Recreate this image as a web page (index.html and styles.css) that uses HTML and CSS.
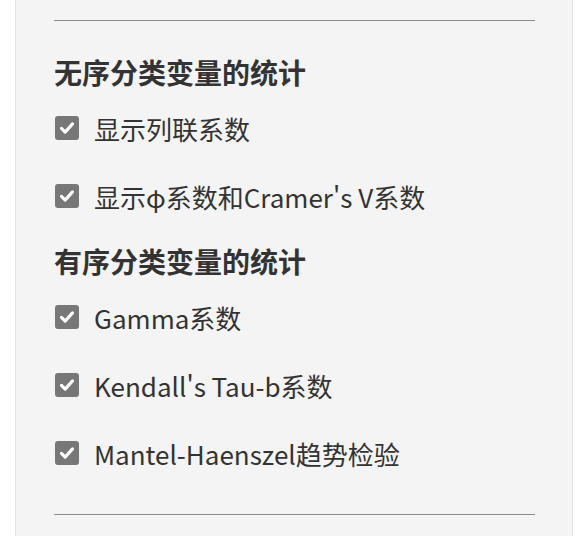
FILE: index.html
```html
<!DOCTYPE html>
<html lang="zh-CN">
<head>
  <meta charset="UTF-8">
  <title>统计选项</title>
  <link rel="stylesheet" href="styles.css">
</head>
<body>
  <div class="panel">
    <hr class="rule">

    <div class="group">
      <h3 class="group-title">无序分类变量的统计</h3>
      <label class="option"><span class="box"><svg viewBox="0 0 24 24"><path d="M6 12.5l4 4 8-9"/></svg></span>显示列联系数</label>
      <label class="option"><span class="box"><svg viewBox="0 0 24 24"><path d="M6 12.5l4 4 8-9"/></svg></span>显示φ系数和Cramer's V系数</label>
    </div>

    <div class="group">
      <h3 class="group-title">有序分类变量的统计</h3>
      <label class="option"><span class="box"><svg viewBox="0 0 24 24"><path d="M6 12.5l4 4 8-9"/></svg></span>Gamma系数</label>
      <label class="option"><span class="box"><svg viewBox="0 0 24 24"><path d="M6 12.5l4 4 8-9"/></svg></span>Kendall's Tau-b系数</label>
      <label class="option"><span class="box"><svg viewBox="0 0 24 24"><path d="M6 12.5l4 4 8-9"/></svg></span>Mantel-Haenszel趋势检验</label>
    </div>

    <hr class="rule rule-bottom">
  </div>
</body>
</html>
```

FILE: styles.css
```css
html, body { margin: 0; background: #fff; height: 100%; overflow: hidden; }
body { font-family: "Noto Sans CJK SC", "Noto Sans", sans-serif; color: #333; }
.panel { box-sizing: border-box; margin-left: 15px; width: 558px; min-height: 100%; padding: 20px 37px 0 38px; background: #f4f4f4; border-left: 1px solid #e2e2e2; border-right: 1px solid #e2e2e2; }
.rule { margin: 0; border: 0; border-top: 1px solid #8a8a8a; }
.rule-bottom { margin-top: 27px; }
.group { display: flex; flex-direction: column; }
.group + .group { margin-top: 9px; }
.group:first-of-type { margin-top: 29px; }
.group-title { margin: 0; height: 44px; display: flex; align-items: center; font-size: 28px; font-weight: bold; }
.option { height: 68px; display: flex; align-items: center; gap: 15px; font-size: 26px; cursor: pointer; }
.box { width: 24px; height: 24px; margin-left: 1px; border-radius: 3px; background: #777; display: flex; align-items: center; justify-content: center; flex: none; }
.box svg { width: 22px; height: 22px; fill: none; stroke: #fff; stroke-width: 3.4; stroke-linecap: round; stroke-linejoin: round; }
```
